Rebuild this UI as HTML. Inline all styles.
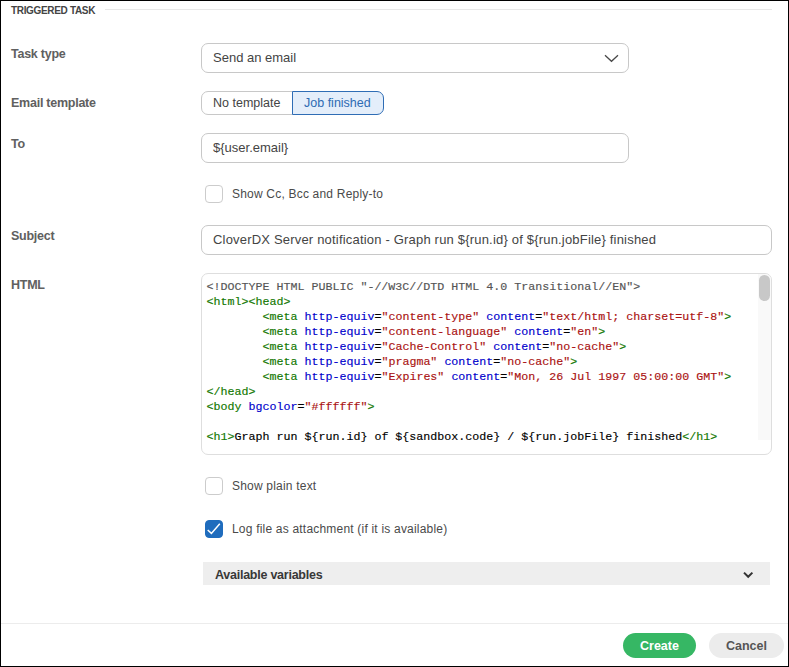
<!DOCTYPE html>
<html><head><meta charset="utf-8">
<style>
*{box-sizing:border-box;margin:0;padding:0}
html,body{width:789px;height:667px;overflow:hidden;background:#fff}
body{position:relative;font-family:"Liberation Sans",sans-serif;color:#333}
.frame{position:absolute;left:0;top:0;width:789px;height:667px;border:1px solid #000}
.abs{position:absolute;white-space:nowrap}
.sect{left:11px;top:5.4px;font-size:10px;letter-spacing:-0.33px;font-weight:bold;color:#444}
.hline{position:absolute;left:105px;top:9px;width:667px;height:1px;background:#e8e8e8}
.lbl{left:11px;font-size:12.5px;font-weight:bold;color:#606060;letter-spacing:-0.25px}
.inp{position:absolute;border:1px solid #c8c8c8;border-radius:7px;background:#fff}
.itxt{font-size:13px;color:#444}
.btng{position:absolute;left:201px;top:91px;height:24px}
.cb{position:absolute;width:18px;height:18px;border:1px solid #cccccc;border-radius:4px;background:#fff}
.cbl{font-size:12px;color:#4a4a4a;letter-spacing:0.2px}
.code{position:absolute;left:201px;top:273px;width:571px;height:182px;border:1px solid #dedede;border-radius:7px;overflow:hidden}
.code pre{position:absolute;left:4.5px;top:5.5px;-webkit-text-stroke:0.15px currentColor;font-family:"Liberation Mono",monospace;font-size:11.67px;line-height:15px;color:#555}
.t{color:#170}.a{color:#00c}.s{color:#a11}.k{color:#000}
.sbtrack{position:absolute;left:556px;top:0;width:14px;height:166px;background:#f9f9f9}
.sbthumb{position:absolute;left:557px;top:1px;width:11px;height:26px;background:#c8c8c8;border-radius:5.5px}
.avail{position:absolute;left:203px;top:562px;width:567px;height:23px;background:#eeeeee}
.footline{position:absolute;left:1px;top:623px;width:787px;height:1px;background:#ececec}
.btn{position:absolute;height:25px;border-radius:13px;font-size:12.5px;font-weight:bold;text-align:center;line-height:27px}
</style></head>
<body>
<div class="abs sect">TRIGGERED TASK</div>
<div class="hline"></div>

<div class="abs lbl" style="top:47px">Task type</div>
<div class="inp" style="left:201px;top:43px;width:428px;height:30px"></div>
<div class="abs itxt" style="left:213px;top:50px">Send an email</div>
<svg class="abs" style="left:604px;top:54px" width="15" height="9" viewBox="0 0 15 9"><path d="M1 1.2 L7.5 7.3 L14 1.2" fill="none" stroke="#484848" stroke-width="1.25"/></svg>

<div class="abs lbl" style="top:96px">Email template</div>
<div class="inp" style="left:201px;top:91px;width:92px;height:24px;border-radius:7px 0 0 7px"></div>
<div class="abs itxt" style="left:213px;top:96px;font-size:12.5px;color:#444">No template</div>
<div class="inp" style="left:292px;top:91px;width:92px;height:24px;border-radius:0 7px 7px 0;border-color:#2f6db5;background:#e4eefa"></div>
<div class="abs itxt" style="left:304px;top:96px;font-size:12.5px;color:#2e6bb3">Job finished</div>

<div class="abs lbl" style="top:137px">To</div>
<div class="inp" style="left:201px;top:133px;width:428px;height:30px"></div>
<div class="abs itxt" style="left:213px;top:140px">${user.email}</div>

<div class="cb" style="left:205px;top:185px"></div>
<div class="abs cbl" style="left:232px;top:187px">Show Cc, Bcc and Reply-to</div>

<div class="abs lbl" style="top:229px">Subject</div>
<div class="inp" style="left:201px;top:225px;width:571px;height:30px"></div>
<div class="abs itxt" style="left:213px;top:232px;letter-spacing:0.19px">CloverDX Server notification - Graph run ${run.id} of ${run.jobFile} finished</div>

<div class="abs lbl" style="top:278px">HTML</div>
<div class="code">
<pre>&lt;!DOCTYPE HTML PUBLIC "-//W3C//DTD HTML 4.0 Transitional//EN"&gt;
<span class="t">&lt;html&gt;&lt;head&gt;</span>
        <span class="t">&lt;meta</span> <span class="a">http-equiv</span><span class="k">=</span><span class="s">"content-type"</span> <span class="a">content</span><span class="k">=</span><span class="s">"text/html; charset=utf-8"</span><span class="t">&gt;</span>
        <span class="t">&lt;meta</span> <span class="a">http-equiv</span><span class="k">=</span><span class="s">"content-language"</span> <span class="a">content</span><span class="k">=</span><span class="s">"en"</span><span class="t">&gt;</span>
        <span class="t">&lt;meta</span> <span class="a">http-equiv</span><span class="k">=</span><span class="s">"Cache-Control"</span> <span class="a">content</span><span class="k">=</span><span class="s">"no-cache"</span><span class="t">&gt;</span>
        <span class="t">&lt;meta</span> <span class="a">http-equiv</span><span class="k">=</span><span class="s">"pragma"</span> <span class="a">content</span><span class="k">=</span><span class="s">"no-cache"</span><span class="t">&gt;</span>
        <span class="t">&lt;meta</span> <span class="a">http-equiv</span><span class="k">=</span><span class="s">"Expires"</span> <span class="a">content</span><span class="k">=</span><span class="s">"Mon, 26 Jul 1997 05:00:00 GMT"</span><span class="t">&gt;</span>
<span class="t">&lt;/head&gt;</span>
<span class="t">&lt;body</span> <span class="a">bgcolor</span><span class="k">=</span><span class="s">"#ffffff"</span><span class="t">&gt;</span>

<span class="t">&lt;h1&gt;</span><span class="k">Graph run ${run.id} of ${sandbox.code} / ${run.jobFile} finished</span><span class="t">&lt;/h1&gt;</span>
</pre>
<div class="sbtrack"></div>
<div class="sbthumb"></div>
</div>

<div class="cb" style="left:205px;top:477px"></div>
<div class="abs cbl" style="left:232px;top:479px">Show plain text</div>

<div class="cb" style="left:205px;top:520px;background:#1f6cbd;border-color:#1f6cbd"></div>
<svg class="abs" style="left:205px;top:520px" width="18" height="18" viewBox="0 0 18 18"><path d="M2.7 10 L6.4 13.4 L14.8 3.7" fill="none" stroke="#fff" stroke-width="1.5"/></svg>
<div class="abs cbl" style="left:232px;top:522px">Log file as attachment (if it is available)</div>

<div class="avail"></div>
<div class="abs" style="left:215px;top:568px;font-size:12.5px;font-weight:bold;color:#383838;letter-spacing:-0.25px">Available variables</div>
<svg class="abs" style="left:742px;top:571px" width="12" height="8" viewBox="0 0 12 8"><path d="M2 1.6 L6.2 5.8 L10.4 1.6" fill="none" stroke="#333" stroke-width="2"/></svg>

<div class="footline"></div>
<div class="btn" style="left:623px;top:633px;width:73px;background:#36b764;color:#fff">Create</div>
<div class="btn" style="left:709px;top:633px;width:75px;background:#ececec;color:#555">Cancel</div>

<div class="frame"></div>
</body></html>
